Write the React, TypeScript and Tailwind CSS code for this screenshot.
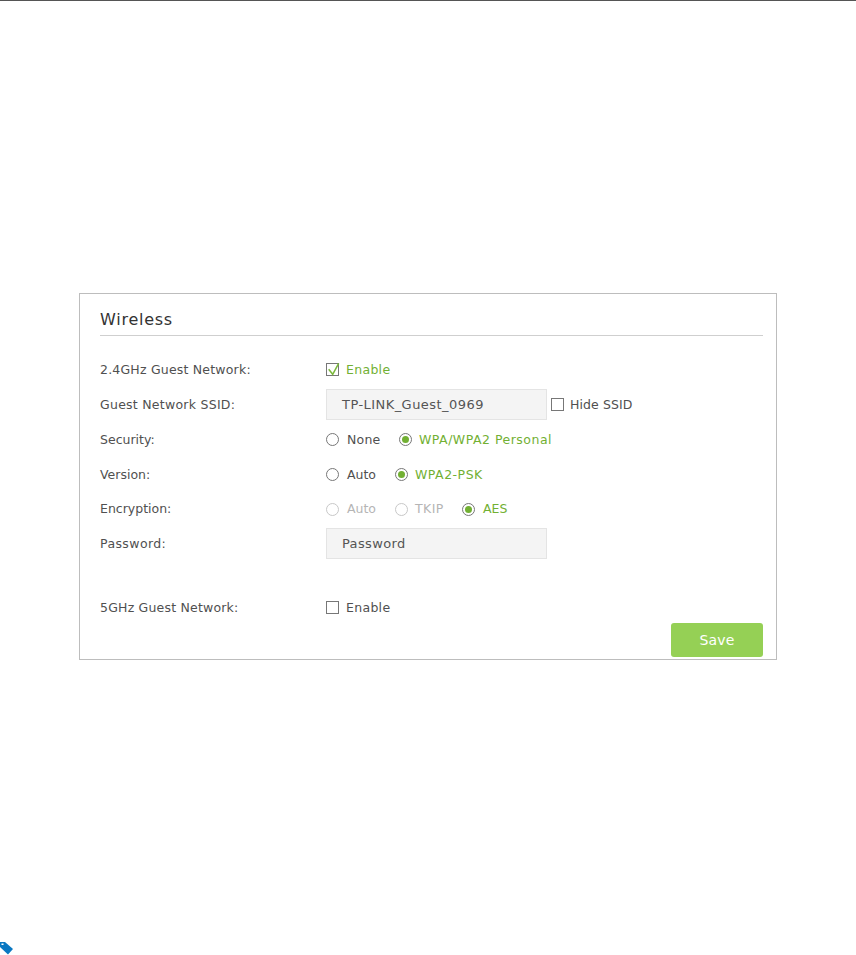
function Radio({ checked, disabled, lift }: { checked?: boolean; disabled?: boolean; lift?: boolean }) {
  return (
    <span
      className={`flex h-[13px] w-[13px] shrink-0 items-center justify-center rounded-full border bg-white ${
        disabled ? 'border-[#c8c8c8]' : 'border-[#777]'
      } ${lift ? 'mb-[2px]' : ''}`}
    >
      {checked && <span className="h-[7px] w-[7px] rounded-full bg-[#72b033]" />}
    </span>
  );
}

function RadioOption({ label, checked, disabled, lift, className }: { label: string; checked?: boolean; disabled?: boolean; lift?: boolean; className: string }) {
  return (
    <div className={`flex items-center ${className}`}>
      <Radio checked={checked} disabled={disabled} lift={lift} />
      <span className={checked ? 'text-[#72b033]' : disabled ? 'text-[#b5b5b5]' : 'text-[#505050]'}>{label}</span>
    </div>
  );
}

function Checkbox({ checked }: { checked?: boolean }) {
  return (
    <span className="relative mb-[2px] block h-[13px] w-[13px] shrink-0 border border-[#777] bg-white">
      {checked && (
        <svg className="absolute -top-[3px] left-px" width="14" height="16" viewBox="0 0 14 16" fill="none">
          <path d="M0.7 8.3 L4.7 13.3 L10.7 2.3" stroke="#7ab83a" strokeWidth="1.5" />
        </svg>
      )}
    </span>
  );
}

function Row({ label, children, className = 'h-[35px]', labelClass = '' }: { label: string; children: React.ReactNode; className?: string; labelClass?: string }) {
  return (
    <div className={`flex items-center ${className}`}>
      <div className={`w-[226px] shrink-0 text-[#505050] ${labelClass}`}>{label}</div>
      <div className="flex items-center">{children}</div>
    </div>
  );
}

export default function App() {
  return (
    <div className="relative h-[955px] w-[856px] overflow-hidden bg-white font-['DejaVu_Sans',sans-serif] text-[12.5px]">
      <div className="h-px w-full bg-[#555]" />
      {/* Wireless card */}
      <div className="ml-[79px] mt-[292px] h-[367px] w-[698px] border border-[#bdbdbd] pl-[20px] pr-[13px]">
        <div className="flex h-[42px] items-end border-b border-[#cfcfcf] pb-[5px] text-[16px] leading-[20px] tracking-[0.75px] text-[#333]">Wireless</div>
        <div className="pt-[17px]">
          <Row label="2.4GHz Guest Network:" labelClass="tracking-[0.2px]">
            <div className="flex items-center gap-[7px]">
              <Checkbox checked />
              <span className="tracking-[0.3px] text-[#72b033]">Enable</span>
            </div>
          </Row>
          <Row label="Guest Network SSID:" labelClass="tracking-[0.26px]">
            <div className="mb-[2px] flex h-[31px] w-[221px] items-center border border-[#e4e4e4] bg-[#f4f4f4] pl-[15px] pt-px text-[13px] tracking-[0.45px] text-[#555]">TP-LINK_Guest_0969</div>
            <div className="ml-[4px] flex items-center gap-[6px]">
              <Checkbox />
              <span className="tracking-[0.1px] text-[#505050]">Hide SSID</span>
            </div>
          </Row>
          <Row label="Security:">
            <RadioOption label="None" lift className="w-[73px] gap-[8px] tracking-[0.2px]" />
            <RadioOption label="WPA/WPA2 Personal" checked lift className="w-[170px] gap-[7px] tracking-[0.5px]" />
          </Row>
          <Row label="Version:" className="h-[34px]">
            <RadioOption label="Auto" lift className="w-[69px] gap-[8px]" />
            <RadioOption label="WPA2-PSK" checked lift className="w-[100px] gap-[7px] tracking-[0.5px]" />
          </Row>
          <Row label="Encryption:">
            <RadioOption label="Auto" disabled className="w-[69px] gap-[8px]" />
            <RadioOption label="TKIP" disabled className="w-[67px] gap-[7px] tracking-[0.4px]" />
            <RadioOption label="AES" checked className="w-[60px] gap-[8px]" />
          </Row>
          <Row label="Password:" labelClass="tracking-[0.4px]">
            <div className="mb-[2px] flex h-[31px] w-[221px] items-center border border-[#e4e4e4] bg-[#f4f4f4] pl-[15px] text-[13px] tracking-[0.35px] text-[#555]">Password</div>
          </Row>
          <Row label="5GHz Guest Network:" className="mt-[29px] h-[35px]" labelClass="tracking-[0.2px]">
            <div className="flex items-center gap-[7px]">
              <Checkbox />
              <span className="tracking-[0.3px] text-[#505050]">Enable</span>
            </div>
          </Row>
        </div>
        <div className="-mt-[3px] flex justify-end">
          <button className="h-[34px] w-[92px] rounded-[3px] bg-[#95d055] text-[14px] tracking-[0.2px] text-white">Save</button>
        </div>
      </div>
      {/* tag icon bottom-left */}
      <svg className="absolute left-0 top-[941px]" width="14" height="14" viewBox="0 0 14 14">
        <path d="M0 1 H5 L13 8 L8 13.5 L0 6 Z" fill="#0a78c2" />
        <rect x="1.5" y="2.5" width="2" height="1.5" fill="#fff" />
      </svg>
    </div>
  );
}
